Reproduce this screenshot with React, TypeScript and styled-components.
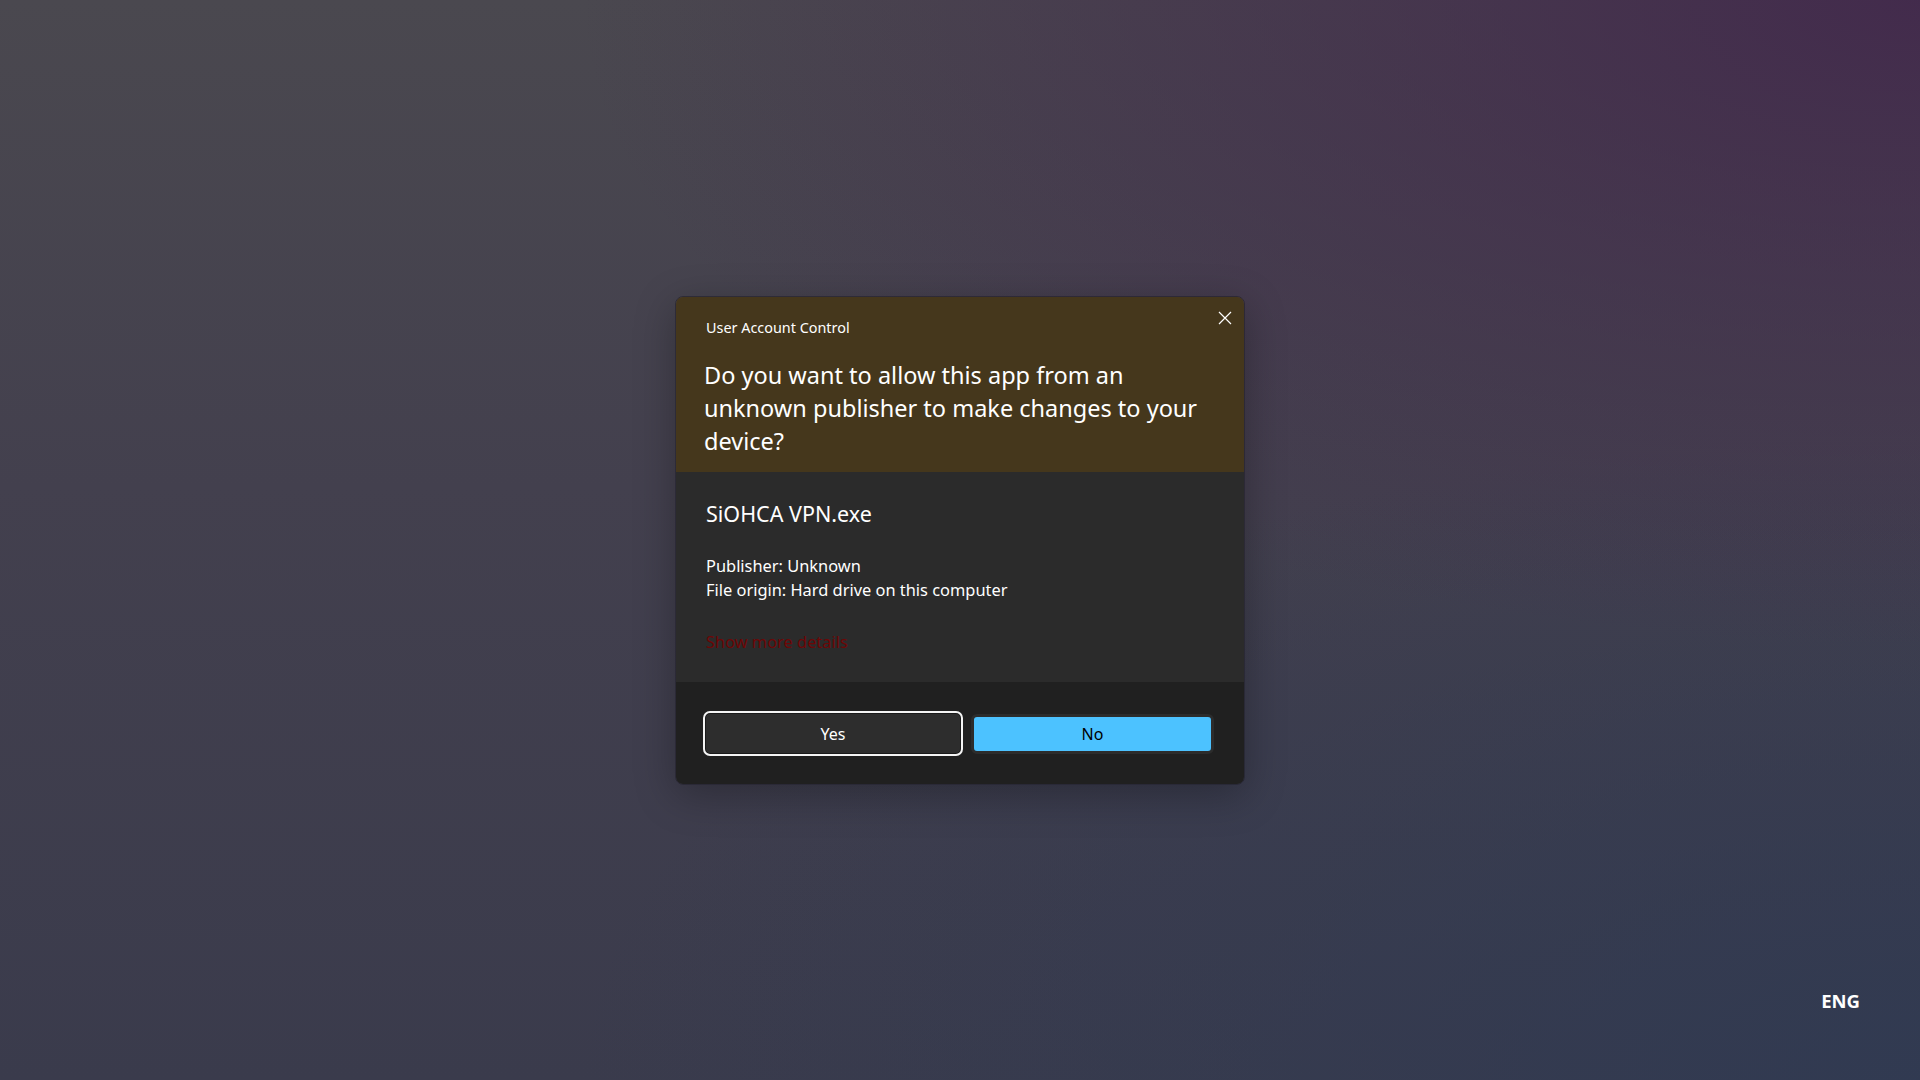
import React from "react";
import styled, { createGlobalStyle } from "styled-components";

const GlobalStyle = createGlobalStyle`
  html, body { margin: 0; padding: 0; }
  body {
    font-family: "Noto Sans", "Open Sans", sans-serif;
    -webkit-font-smoothing: antialiased;
  }
  * { box-sizing: border-box; }
`;

const Desktop = styled.div`
  position: relative;
  width: 1920px;
  height: 1080px;
  overflow: hidden;
  display: flex;
  align-items: center;
  justify-content: center;
  background:
    radial-gradient(ellipse 70% 60% at 100% 0%, rgba(66, 40, 76, 0.9) 0%, rgba(66, 40, 76, 0) 100%),
    radial-gradient(ellipse 70% 60% at 100% 100%, rgba(48, 58, 82, 0.9) 0%, rgba(48, 58, 82, 0) 100%),
    linear-gradient(180deg, #4a484f 0%, #43404e 45%, #3a3b4c 100%);
`;

const Dialog = styled.div`
  width: 570px;
  height: 489px;
  display: flex;
  flex-direction: column;
  border-radius: 8px;
  overflow: hidden;
  border: 1px solid rgba(30, 28, 40, 0.6);
  box-shadow: 0 10px 40px rgba(0, 0, 0, 0.28);
  color: #ffffff;
`;

const Header = styled.div`
  background: #45371c;
  padding: 14px 12px 14px 30px;
  display: flex;
  flex-direction: column;
`;

const TitleRow = styled.div`
  display: flex;
  align-items: flex-start;
  justify-content: space-between;
`;

const Title = styled.div`
  margin-top: 7px;
  font-size: 14.4px;
  line-height: 20px;
  color: #ffffff;
`;

const CloseButton = styled.button`
  width: 15px;
  height: 15px;
  padding: 0;
  border: none;
  background: transparent;
  display: flex;
  align-items: center;
  justify-content: center;
  cursor: pointer;
`;

const Question = styled.div`
  margin-top: 21px;
  margin-left: -2px;
  max-width: 505px;
  font-size: 23.5px;
  line-height: 33px;
  color: #ffffff;
`;

const Body = styled.div`
  flex: 1;
  background: #2b2b2b;
  padding: 28px 30px 0 30px;
  display: flex;
  flex-direction: column;
`;

const AppName = styled.div`
  font-size: 21.5px;
  line-height: 28px;
`;

const Details = styled.div`
  margin-top: 26px;
  font-size: 16.4px;
  line-height: 24px;
`;

const MoreLink = styled.a`
  margin-top: 28px;
  font-size: 16.4px;
  line-height: 24px;
  color: #6e0606;
  text-decoration: none;
  cursor: pointer;
`;

const Footer = styled.div`
  height: 102px;
  flex-shrink: 0;
  background: #202020;
  display: flex;
  align-items: center;
  gap: 8px;
  padding: 2px 30px 0 27px;
`;

const Button = styled.button<{ $primary?: boolean }>`
  font-family: inherit;
  font-size: 16px;
  cursor: pointer;
  display: flex;
  align-items: center;
  justify-content: center;
  width: ${(p) => (p.$primary ? "243px" : "260px")};
  height: ${(p) => (p.$primary ? "40px" : "45px")};
  border-radius: ${(p) => (p.$primary ? "6px" : "7px")};
  border: ${(p) => (p.$primary ? "3px solid #2c2c2c" : "2px solid #f4f4f4")};
  background: ${(p) => (p.$primary ? "#4cc2ff" : "#2d2d2d")};
  color: ${(p) => (p.$primary ? "#000000" : "#ffffff")};
  box-shadow: ${(p) => (p.$primary ? "none" : "inset 0 0 0 1px #1a1a1a")};
`;

const Lang = styled.div`
  position: absolute;
  right: 60px;
  bottom: 67px;
  font-size: 18.5px;
  font-weight: 700;
  color: #ffffff;
`;

export default function App() {
  return (
    <>
      <GlobalStyle />
      <Desktop>
        <Dialog>
          <Header>
            <TitleRow>
              <Title>User Account Control</Title>
              <CloseButton aria-label="Close">
                <svg width="14" height="14" viewBox="0 0 14 14">
                  <path d="M1 1 L13 13 M13 1 L1 13" stroke="#ffffff" strokeWidth="1.2" fill="none" />
                </svg>
              </CloseButton>
            </TitleRow>
            <Question>
              Do you want to allow this app from an unknown publisher to make changes to your device?
            </Question>
          </Header>
          <Body>
            <AppName>SiOHCA VPN.exe</AppName>
            <Details>
              Publisher: Unknown
              <br />
              File origin: Hard drive on this computer
            </Details>
            <MoreLink>Show more details</MoreLink>
          </Body>
          <Footer>
            <Button>Yes</Button>
            <Button $primary>No</Button>
          </Footer>
        </Dialog>
        <Lang>ENG</Lang>
      </Desktop>
    </>
  );
}
